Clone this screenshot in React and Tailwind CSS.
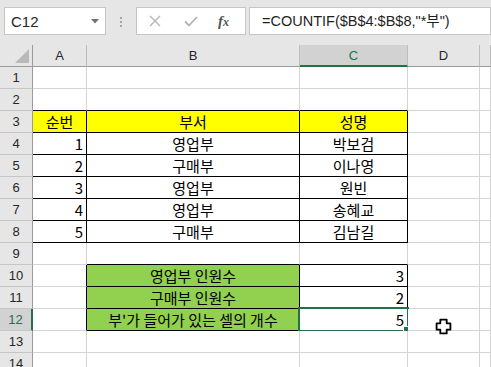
const KR = "font-['Noto_Sans_CJK_KR','Noto_Sans',sans-serif]";

// border presets for cells (right / bottom)
const NONE = 'border-r-[#d4d4d4] border-b-[#d4d4d4]';
const R = 'border-r-black border-b-[#d4d4d4]';
const B = 'border-r-[#d4d4d4] border-b-black';
const RB = 'border-r-black border-b-black';

const rows = [
  { n: 1, cells: [{}, {}, {}] },
  { n: 2, cells: [{ b: B }, { b: B }, { b: B }] },
  {
    n: 3,
    cells: [
      { b: RB, bg: 'bg-[#ffff00]', text: '순번', align: 'center' },
      { b: RB, bg: 'bg-[#ffff00]', text: '부서', align: 'center' },
      { b: RB, bg: 'bg-[#ffff00]', text: '성명', align: 'center' },
    ],
  },
  { n: 4, cells: [{ b: RB, text: '1', align: 'right' }, { b: RB, text: '영업부', align: 'center' }, { b: RB, text: '박보검', align: 'center' }] },
  { n: 5, cells: [{ b: RB, text: '2', align: 'right' }, { b: RB, text: '구매부', align: 'center' }, { b: RB, text: '이나영', align: 'center' }] },
  { n: 6, cells: [{ b: RB, text: '3', align: 'right' }, { b: RB, text: '영업부', align: 'center' }, { b: RB, text: '원빈', align: 'center' }] },
  { n: 7, cells: [{ b: RB, text: '4', align: 'right' }, { b: RB, text: '영업부', align: 'center' }, { b: RB, text: '송혜교', align: 'center' }] },
  { n: 8, cells: [{ b: RB, text: '5', align: 'right' }, { b: RB, text: '구매부', align: 'center' }, { b: RB, text: '김남길', align: 'center' }] },
  { n: 9, cells: [{}, { b: B }, { b: B }] },
  { n: 10, cells: [{ b: R }, { b: RB, bg: 'bg-[#92d050]', text: '영업부 인원수', align: 'center' }, { b: RB, text: '3', align: 'right' }] },
  { n: 11, cells: [{ b: R }, { b: RB, bg: 'bg-[#92d050]', text: '구매부 인원수', align: 'center' }, { b: RB, text: '2', align: 'right' }] },
  { n: 12, cells: [{ b: R }, { b: RB, bg: 'bg-[#92d050]', text: "부'가 들어가 있는 셀의 개수", align: 'center' }, { b: RB, text: '5', align: 'right', selected: true }] },
  { n: 13, cells: [{}, {}, {}] },
  { n: 14, cells: [{}, {}, {}] },
];

function Cell({ cell }) {
  const align = cell.align === 'right' ? 'justify-end pr-[3px]' : 'justify-center';
  return (
    <div
      className={`relative h-[22px] border-r border-b flex items-center ${align} ${cell.b || NONE} ${cell.bg || 'bg-white'} ${KR} text-[15px] leading-none text-black whitespace-nowrap`}
    >
      {cell.text}
      {cell.selected && (
        <>
          <div className="absolute -left-[2px] -top-[2px] -right-[2px] -bottom-[2px] border-2 border-[#217346]" />
          <div className="absolute left-[103px] top-[17px] w-[7px] h-[7px] bg-[#217346] border border-white" />
        </>
      )}
    </div>
  );
}

function RowHeader({ n, selected }) {
  return (
    <div
      className={`h-[22px] border-b border-b-[#c6c6c6] flex items-center justify-center text-[13px] leading-none ${
        selected
          ? 'bg-[#d2d2d2] text-[#217346] border-r-2 border-r-[#217346]'
          : 'bg-[#e6e6e6] text-[#262626] border-r border-r-[#9b9b9b]'
      }`}
    >
      {n}
    </div>
  );
}

function ColHeader({ label, selected }) {
  return (
    <div
      className={`h-[22px] border-r border-r-[#bdbdbd] flex items-center justify-center text-[13px] leading-none ${
        selected
          ? 'bg-[#d2d2d2] text-[#217346] border-b-2 border-b-[#217346]'
          : 'bg-[#e6e6e6] text-[#262626] border-b border-b-[#9b9b9b]'
      }`}
    >
      {label}
    </div>
  );
}

function FormulaBar() {
  return (
    <div className="h-[45px] bg-[#e6e6e6] flex items-start pt-[7px] pl-[4px]">
      <div className="w-[102px] h-[28px] bg-white border border-[#c6c6c6] flex items-center pl-[6px] pr-[6px]">
        <span className="text-[15px] text-[#262626] leading-none">C12</span>
        <svg className="ml-auto" width="8" height="5" viewBox="0 0 8 5">
          <path d="M0 0h8L4 4.5z" fill="#707070" />
        </svg>
      </div>
      <div className="ml-[14px] mt-[10px] flex flex-col gap-[2px]">
        <div className="w-[2px] h-[2px] bg-[#a6a6a6]" />
        <div className="w-[2px] h-[2px] bg-[#a6a6a6]" />
        <div className="w-[2px] h-[2px] bg-[#a6a6a6]" />
      </div>
      <div className="ml-[14px] w-[110px] h-[28px] bg-white border border-[#c6c6c6] flex items-center">
        <svg className="ml-[12px]" width="12" height="12" viewBox="0 0 12 12">
          <path d="M1 1l10 10M11 1L1 11" stroke="#b4b4b4" strokeWidth="1.4" />
        </svg>
        <svg className="ml-[23px]" width="14" height="11" viewBox="0 0 14 11">
          <path d="M1 5.5l4 4 8-8.5" stroke="#b4b4b4" strokeWidth="1.8" fill="none" />
        </svg>
        <span className="ml-[20px] font-['Liberation_Serif',serif] italic font-bold text-[15px] leading-none text-[#555]">
          f<span className="text-[12px]">x</span>
        </span>
      </div>
      <div className="ml-[3px] flex-1 h-[28px] bg-white border border-[#c6c6c6] flex items-center pl-[12px]">
        <span className="font-['Liberation_Sans','Noto_Sans_CJK_KR',sans-serif] text-[14.5px] leading-none text-[#1f1f1f] whitespace-nowrap">
          =COUNTIF($B$4:$B$8,"*부")
        </span>
      </div>
    </div>
  );
}

export default function App() {
  return (
    <div className="relative w-[491px] h-[367px] overflow-hidden bg-white font-['Liberation_Sans',sans-serif]">
      <FormulaBar />
      <div className="grid grid-cols-[33px_54px_213px_108px_72px_1fr]">
        <div className="h-[22px] bg-[#e6e6e6] border-r border-b border-r-[#9b9b9b] border-b-[#9b9b9b] flex items-end justify-end pr-[3px] pb-[3px]">
          <svg width="14" height="14" viewBox="0 0 14 14">
            <path d="M14 0v14H0z" fill="#b9b9b9" />
          </svg>
        </div>
        <ColHeader label="A" />
        <ColHeader label="B" />
        <ColHeader label="C" selected />
        <ColHeader label="D" />
        <ColHeader label="" />
        {rows.map((row) => (
          <div key={row.n} className="contents">
            <RowHeader n={row.n} selected={row.n === 12} />
            {row.cells.map((c, i) => (
              <Cell key={i} cell={c} />
            ))}
            <Cell cell={{}} />
            <Cell cell={{}} />
          </div>
        ))}
      </div>
      {/* mouse cursor */}
      <svg className="absolute left-[435px] top-[318px]" width="17" height="17" viewBox="0 0 16 16">
        <path
          d="M5 1.5h6v3.5h3.5v6H11v3.5H5V11H1.5V5H5z"
          fill="#fff"
          stroke="#000"
          strokeWidth="1.7"
          strokeLinejoin="round"
        />
      </svg>
    </div>
  );
}
